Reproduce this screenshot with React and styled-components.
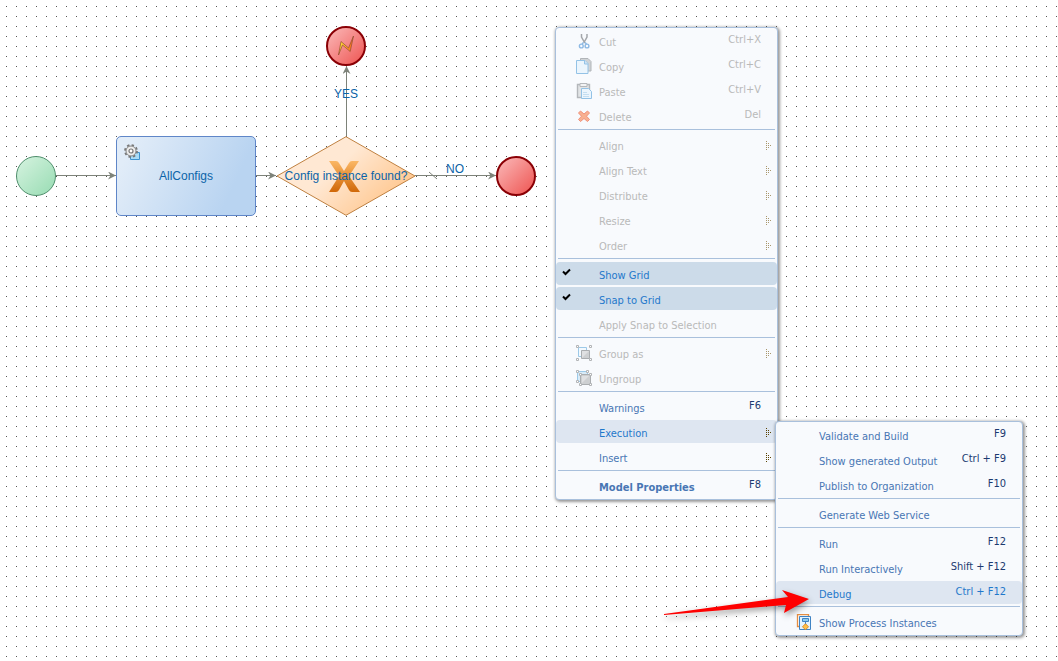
import React from 'react';
import styled, { createGlobalStyle, css } from 'styled-components';

const Global = createGlobalStyle`
  *, *::before, *::after { box-sizing: border-box; }
  html, body { margin: 0; padding: 0; background: #fff; }
  body { overflow: hidden; font-family: "Liberation Sans", Arial, sans-serif; }
`;

const Canvas = styled.main`
  position: relative;
  min-height: 100vh;
  overflow: hidden;
  background-color: #fff;
  background-image:
    linear-gradient(90deg, transparent 1px, #fff 1px),
    linear-gradient(#555 1px, #fff 1px);
  background-size: 10px 10px;
  background-position: 6px 6px;
`;

const Flow = styled.svg`
  position: absolute;
  left: 0;
  top: 0;
  width: 560px;
  height: 240px;
  pointer-events: none;
`;

const Node = styled.div`
  position: absolute;
  display: flex;
  align-items: center;
  justify-content: center;
  left: ${(p) => p.$x}px;
  top: ${(p) => p.$y}px;
  color: #0b64a8;
  font-size: 12px;
  line-height: 14px;
  white-space: nowrap;
`;

const EventNode = styled(Node)`
  width: 40px;
  height: 40px;
  border-radius: 50%;
  ${(p) =>
    p.$end
      ? css`
          border: 2px solid #8a0005;
          background: linear-gradient(135deg, #fbb9b9, #ee5552);
        `
      : css`
          border: 1px solid #4f8e6c;
          background: linear-gradient(135deg, #d6f3e0, #98dcb3);
        `}
`;

const TaskNode = styled(Node)`
  width: 140px;
  height: 80px;
  border: 1px solid #5f86c8;
  border-radius: 5px;
  background: linear-gradient(115deg, #e1ecf8 10%, #b9d4f1 80%);
`;

const TaskIcon = styled.svg`
  position: absolute;
  left: 7px;
  top: 7px;
`;

const GatewayNode = styled(Node)`
  width: 140px;
  height: 80px;
`;

const GatewayShape = styled.svg`
  position: absolute;
  inset: 0;
`;

const Label = styled.span`
  position: relative;
`;

const Menu = styled.div`
  position: absolute;
  left: ${(p) => p.$x}px;
  top: ${(p) => p.$y}px;
  width: ${(p) => p.$w}px;
  display: flex;
  flex-direction: column;
  gap: 2px;
  padding: 1px 0 2px;
  border: 1px solid #a9c0dc;
  border-radius: 4px;
  background: #f8fafd;
  box-shadow: 1px 1px 3px 1px rgba(0, 0, 0, 0.4);
  font-family: "DejaVu Sans Condensed", "Noto Sans", sans-serif;
`;

const Separator = styled.hr`
  width: auto;
  height: 2px;
  margin: 0 2px;
  border: 0;
  border-top: 1px solid #a9c0dc;
`;

const rowStyle = css`
  display: grid;
  grid-template-columns: 16px 16px 1fr auto;
  column-gap: 2px;
  align-items: center;
  width: 100%;
  height: 23px;
  margin: 0;
  padding: 0 ${(p) => (p.$sub ? 5 : 16)}px 0 2px;
  border: 0;
  border-radius: 4px;
  background: ${(p) => (p.$checked ? '#ccdbe9' : p.$active ? '#dee6f1' : 'transparent')};
  color: ${(p) => (p.$off ? '#b9b9b9' : p.$active || p.$checked ? '#1f78cb' : '#4876b4')};
  font-family: inherit;
  font-size: 11px;
  font-weight: ${(p) => (p.$bold ? 700 : 400)};
  line-height: 14px;
  text-align: left;
  white-space: nowrap;
`;

const Row = styled.button`
  ${rowStyle}
`;

const CheckRow = styled.label`
  ${rowStyle}
`;

const IconSlot = styled.span`
  display: flex;
  width: 16px;
  height: 16px;
`;

const Caption = styled.span`
  padding: 5px 0 0 5px;
`;

const Shortcut = styled.span`
  padding-bottom: 2px;
  font-weight: 400;
  color: ${(p) => (p.$off ? '#b9b9b9' : p.$active ? '#1f78cb' : '#1c3a70')};
`;

const ArrowSlot = styled.svg`
  margin-top: 2px;
`;

const CheckBox = styled.input`
  appearance: none;
  grid-area: 1 / 1;
  width: 16px;
  height: 16px;
  margin: 0;
`;

const CheckMark = styled.svg`
  grid-area: 1 / 1;
  pointer-events: none;
`;

const Pointer = styled.svg`
  position: absolute;
  left: 655px;
  top: 580px;
  pointer-events: none;
  filter: drop-shadow(1px 3px 3px rgba(0, 0, 0, 0.4));
`;

const icons = {
  cut: (
    <>
      <path d="M5.500 1v3l3.300 6M11 1v3l-3.300 6" stroke="#a3a6aa" strokeWidth="1.500" fill="none" />
      <path d="M7.500 9.500L6 11M9 9.500L10.500 11" stroke="#8db9e4" strokeWidth="1.500" />
      <circle cx="5.300" cy="13" r="1.900" fill="none" stroke="#8db9e4" strokeWidth="1.400" />
      <circle cx="11" cy="13" r="1.900" fill="none" stroke="#8db9e4" strokeWidth="1.400" />
    </>
  ),
  copy: (
    <>
      <path d="M4.500.5h7.500l3 3v9.500h-10.500z" fill="#d0d3d6" stroke="#b0b4b8" />
      <path d="M.5 2.500h8.500l3 3v10H.5z" fill="#ebf5fd" stroke="#93c2e6" />
      <path d="M8.500 2.500v3.500h3.500" fill="#cfe4f6" stroke="#93c2e6" />
    </>
  ),
  paste: (
    <>
      <path d="M1.500 1.500h12v13h-12z" fill="#e2e4e6" stroke="#b4b7bb" strokeWidth="1.400" />
      <path d="M4 .5h7v3H4z" fill="#f2f3f4" stroke="#b4b7bb" />
      <path d="M5.500 5.500h7l3 3v7h-10z" fill="#ebf5fd" stroke="#93c2e6" />
      <path d="M7 9.500h4M7 11.500h6M7 13.500h6" stroke="#c4def1" />
    </>
  ),
  remove: (
    <path
      d="M4.500 3L8 6l3.500-3L13.500 5l-3 3.200 3 3.300-2 2L8 10.500l-3.500 3-2-2 3-3.300-3-3.200z"
      fill="#f8b090"
      stroke="#f0917a"
    />
  ),
  group: (
    <>
      <path d="M2.500 2.500h8v9h-8z" fill="#f3f9fe" stroke="#9cc9e8" />
      <path d="M5.500 5.500h8v8h-8z" fill="#cdcfd1" stroke="#aaadb0" />
      <path d="M6 6h7l-7 7z" fill="#dfe0e2" />
      <g fill="#fff" stroke="#b2b4b7">
        <path d="M.5.5h2v2h-2zM13.500.5h2v2h-2zM.5 13.500h2v2h-2zM13.500 13.500h2v2h-2z" />
      </g>
    </>
  ),
  ungroup: (
    <>
      <path d="M1.500 1.500h10v10h-10z" fill="#d8ebf8" stroke="#9cc9e8" />
      <path d="M4.500 4.500h10v10h-10z" fill="#cdcfd1" stroke="#aaadb0" />
      <path d="M6 6h7l-7 7z" fill="#dfe0e2" />
      <g fill="#fff" stroke="#b2b4b7">
        <path d="M.5.5h2v2h-2zM10.500.5h2v2h-2zM.5 10.500h2v2h-2zM13.500 3.500h2v2h-2zM3.500 3.500h2v2h-2zM3.500 13.500h2v2h-2zM13.500 13.500h2v2h-2z" />
      </g>
    </>
  ),
  process: (
    <>
      <path d="M1.500.5h11v12h-11z" fill="#fff" stroke="#e58e42" strokeWidth="1.300" />
      <path d="M3.500 2.500h11v13h-11z" fill="#e4f3fd" stroke="#3f83c4" />
      <path d="M6.500 4.500h6v3h-6z" fill="#8ccbf0" stroke="#3f83c4" />
      <path d="M9.500 7.500v3" stroke="#3f83c4" />
      <path d="M9.500 9.800l3 3-3 3-3-3z" fill="#fdc04a" stroke="#e08a20" />
    </>
  ),
};

const Icon = ({ name }) => (
  <IconSlot>
    <svg width="16" height="16" viewBox="0 0 16 16" aria-hidden="true">
      {icons[name]}
    </svg>
  </IconSlot>
);

const arrowDots = [[0, 0], [0, 2], [2, 2], [0, 4], [2, 4], [4, 4], [0, 6], [2, 6], [0, 8]];

const SubmenuArrow = ({ off }) => (
  <ArrowSlot width="6" height="9" viewBox="0 0 6 9" aria-hidden="true">
    {arrowDots.map(([x, y]) => (
      <rect key={`${x}-${y}`} x={x} y={y} width="1" height="1" fill={off ? '#a8966c' : '#5a4200'} />
    ))}
  </ArrowSlot>
);

const MenuItem = ({ item }) => {
  const { label, keys, off, icon, sub, active, checked, bold } = item;
  if (checked) {
    return (
      <CheckRow $checked>
        <CheckBox type="checkbox" defaultChecked />
        <CheckMark width="16" height="16" viewBox="0 0 16 16" aria-hidden="true">
          <path d="M5 5.500L7.500 8 12 3.500" fill="none" stroke="#000" strokeWidth="2" />
        </CheckMark>
        <IconSlot />
        <Caption>{label}</Caption>
      </CheckRow>
    );
  }
  return (
    <Row type="button" disabled={off} $off={off} $active={active} $bold={bold} $sub={sub}>
      <IconSlot />
      <Icon name={icon} />
      <Caption>{label}</Caption>
      {keys && <Shortcut $off={off} $active={active}>{keys}</Shortcut>}
      {sub && <SubmenuArrow off={off} />}
    </Row>
  );
};

const MenuList = ({ items, x, y, w, name }) => (
  <Menu $x={x} $y={y} $w={w} aria-label={name}>
    {items.map((item, i) => (item === '-' ? <Separator key={i} /> : <MenuItem key={i} item={item} />))}
  </Menu>
);

const contextItems = [
  { label: 'Cut', keys: 'Ctrl+X', off: true, icon: 'cut' },
  { label: 'Copy', keys: 'Ctrl+C', off: true, icon: 'copy' },
  { label: 'Paste', keys: 'Ctrl+V', off: true, icon: 'paste' },
  { label: 'Delete', keys: 'Del', off: true, icon: 'remove' },
  '-',
  { label: 'Align', off: true, sub: true },
  { label: 'Align Text', off: true, sub: true },
  { label: 'Distribute', off: true, sub: true },
  { label: 'Resize', off: true, sub: true },
  { label: 'Order', off: true, sub: true },
  '-',
  { label: 'Show Grid', checked: true },
  { label: 'Snap to Grid', checked: true },
  { label: 'Apply Snap to Selection', off: true },
  '-',
  { label: 'Group as', off: true, icon: 'group', sub: true },
  { label: 'Ungroup', off: true, icon: 'ungroup' },
  '-',
  { label: 'Warnings', keys: 'F6' },
  { label: 'Execution', active: true, sub: true },
  { label: 'Insert', sub: true },
  '-',
  { label: 'Model Properties', keys: 'F8', bold: true },
];

const executionItems = [
  { label: 'Validate and Build', keys: 'F9' },
  { label: 'Show generated Output', keys: 'Ctrl + F9' },
  { label: 'Publish to Organization', keys: 'F10' },
  '-',
  { label: 'Generate Web Service' },
  '-',
  { label: 'Run', keys: 'F12' },
  { label: 'Run Interactively', keys: 'Shift + F12' },
  { label: 'Debug', keys: 'Ctrl + F12', active: true },
  '-',
  { label: 'Show Process Instances', icon: 'process' },
];

export default function App() {
  return (
    <>
      <Global />
      <Canvas>
        <EventNode $x={16} $y={156} />
        <TaskNode $x={116} $y={136}>
          <TaskIcon width="17" height="17" viewBox="0 0 17 17" aria-hidden="true">
            <path d="M6.500 8.500h9v7h-9z" fill="#a9dcf7" stroke="#3d93d0" />
            <circle cx="7" cy="7" r="6" fill="none" stroke="#777" strokeWidth="1.800" strokeDasharray="2.400 2.300" />
            <circle cx="7" cy="7" r="5" fill="#eee" stroke="#858585" />
            <circle cx="7" cy="7" r="2" fill="#fff" stroke="#777" strokeWidth="1.200" />
          </TaskIcon>
          <Label>AllConfigs</Label>
        </TaskNode>
        <GatewayNode $x={276} $y={136}>
          <GatewayShape width="140" height="80" viewBox="0 0 140 80" aria-hidden="true">
            <defs>
              <linearGradient id="gatewayFill" x1="0" y1="0.2" x2="1" y2="0.8">
                <stop offset="0.4" stopColor="#ffe8d3" />
                <stop offset="0.9" stopColor="#ffc78f" />
              </linearGradient>
              <linearGradient id="crossFill" x1="0" y1="0" x2="0" y2="1">
                <stop offset="0" stopColor="#fbb765" />
                <stop offset="1" stopColor="#d06808" />
              </linearGradient>
            </defs>
            <path d="M1 40L70 .7 139 40 70 79.300z" fill="url(#gatewayFill)" stroke="#bf8040" />
            <path
              d="M53 25h7q2 0 3 2l5 8 5-8q1-2 3-2h7L73 40l11 16h-8q-2 0-3-2l-5-9-5 9q-1 2-3 2h-7L63 40z"
              fill="url(#crossFill)"
            />
          </GatewayShape>
          <Label>Config instance found?</Label>
        </GatewayNode>
        <EventNode $x={326} $y={26} $end>
          <svg width="20" height="22" viewBox="0 0 20 22" aria-hidden="true">
            <defs>
              <linearGradient id="boltFill" x1="0" y1="0" x2="1" y2="0">
                <stop offset="0.2" stopColor="#ffd836" />
                <stop offset="0.8" stopColor="#ff7a1c" />
              </linearGradient>
            </defs>
            <path d="M2.500 20L5 6.500l7.500 6.500 5-12-3.300 15.500-7.700-6.500z" fill="url(#boltFill)" stroke="#8f4a30" strokeWidth="0.700" />
          </svg>
        </EventNode>
        <EventNode $x={496} $y={156} $end />
        <Flow viewBox="0 0 560 240" aria-hidden="true">
          <defs>
            <marker id="arrowHead" markerWidth="9" markerHeight="9" refX="8" refY="4" orient="auto" markerUnits="userSpaceOnUse">
              <path d="M0 0L8 4 0 8 2.500 4z" fill="#7d8279" />
            </marker>
          </defs>
          <g stroke="#7d8279" fill="none">
            <path d="M56 175.500H116" markerEnd="url(#arrowHead)" />
            <path d="M256 175.500H276" markerEnd="url(#arrowHead)" />
            <path d="M346.500 136V66" markerEnd="url(#arrowHead)" />
            <path d="M415 175.500H496" markerEnd="url(#arrowHead)" />
            <path d="M429 172L437 179" />
          </g>
        </Flow>
        <Node $x={334} $y={87}>YES</Node>
        <Node $x={446} $y={162}>NO</Node>
        <MenuList name="Canvas menu" items={contextItems} x={555} y={27} w={223} />
        <MenuList name="Execution" items={executionItems} x={775} y={421} w={248} />
        <Pointer width="160" height="50" viewBox="0 0 160 50" aria-hidden="true">
          <path d="M9 34L133 17 127 10 154 19 129 33 131 25 9 35z" fill="#fe0000" />
        </Pointer>
      </Canvas>
    </>
  );
}
